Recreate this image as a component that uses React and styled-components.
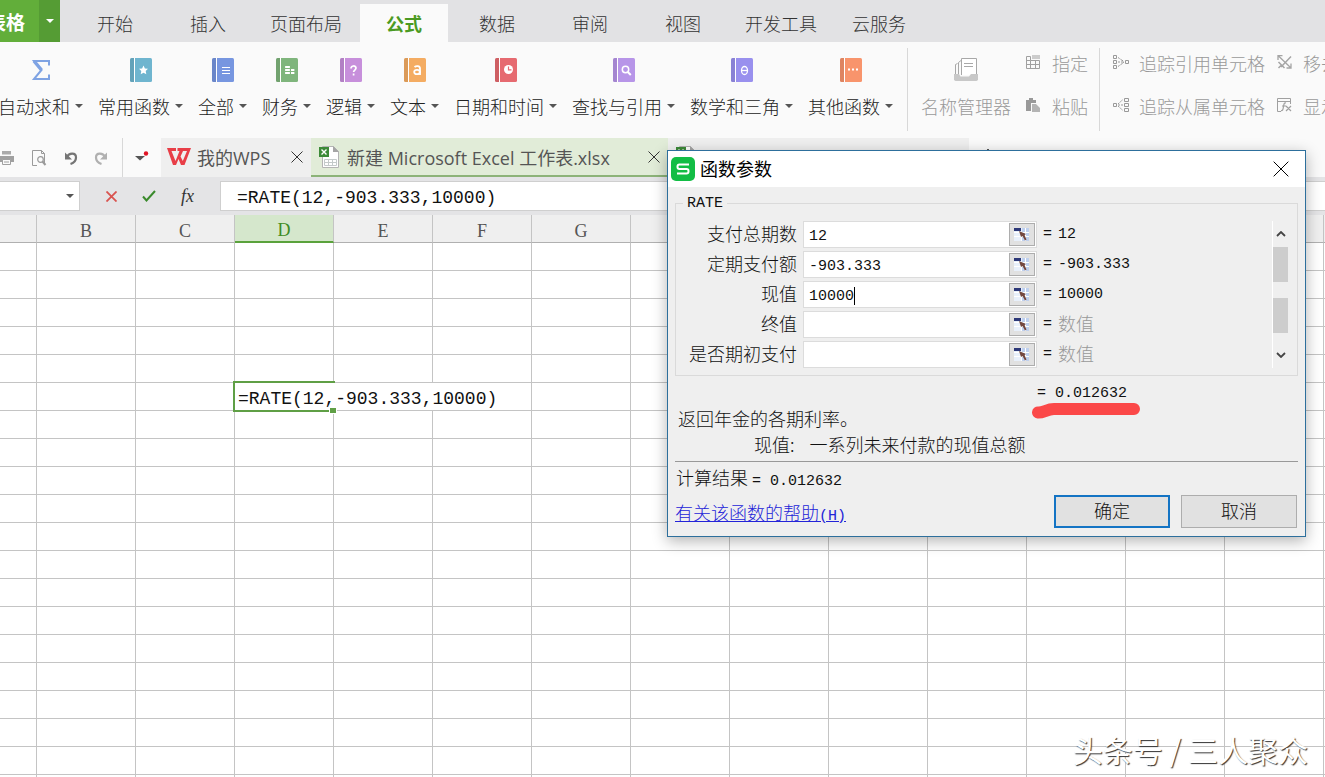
import { useState } from "react";
import styled, { createGlobalStyle } from "styled-components";

const COLUMNS = "ABCDEFGHIJKLMNOPQRSTUVWXYZ".split("")
const ROWS = 40
const FORMULA = "=RATE(12,-903.333,10000)"

const menus = ["开始", "插入", "页面布局", "公式", "数据", "审阅", "视图", "开发工具", "云服务"]

const functions = [
    { name: "常用函数", color: "#6fb5cf", glyph: "star" },
    { name: "全部", color: "#7796e0", glyph: "lines" },
    { name: "财务", color: "#7fb57c", glyph: "coins" },
    { name: "逻辑", color: "#c78fdb", glyph: "question" },
    { name: "文本", color: "#f4ac62", glyph: "letter" },
    { name: "日期和时间", color: "#e66a70", glyph: "clock" },
    { name: "查找与引用", color: "#b795e8", glyph: "search" },
    { name: "数学和三角", color: "#9990ee", glyph: "theta" },
    { name: "其他函数", color: "#f8946c", glyph: "dots" },
]

const params = [
    { id: "nper", label: "支付总期数", value: "12" },
    { id: "pmt", label: "定期支付额", value: "-903.333" },
    { id: "pv", label: "现值", value: "10000", caret: true },
    { id: "fv", label: "终值", value: "" },
    { id: "type", label: "是否期初支付", value: "" },
]

const glyphs = {
    star: <path d="M13.500 7.500l1.400 2.900 3.100.4-2.300 2.200.6 3.200-2.800-1.500-2.800 1.500.6-3.200-2.300-2.200 3.100-.4z" fill="#fff" />,
    lines: <path d="M10 9.500h8M10 12.500h8M10 15.500h8" stroke="#fff" strokeWidth="1.200" />,
    coins: (
        <g fill="#fff">
            <path d="M9.500 8h4l.5.5v1l-.5.5h-4L9 9.500v-1zM9.500 11h4l.5.5v1l-.5.5h-4l-.5-.5v-1zM9.500 14h4l.5.500v1l-.500.500h-4l-.500-.500v-1z" />
            <path d="M15 11h3l.5.5v1l-.5.5h-3zM15 14h3l.5.5v1l-.5.5h-3z" />
        </g>
    ),
    question: <path d="M11 10.500c0-3.400 5-3.200 5-.4 0 2-2.400 1.900-2.400 4M13.600 15.500v2" stroke="#fff" strokeWidth="1.700" fill="none" />,
    letter: (
        <g fill="none" stroke="#fff" strokeWidth="1.800">
            <path d="M10.500 9c1.500-1.200 5.500-1.500 5.500 1.500v6.500" />
            <ellipse cx="13" cy="14" rx="2.800" ry="2.200" />
        </g>
    ),
    clock: (
        <g>
            <circle cx="13.500" cy="11.500" r="4.500" fill="#fff" />
            <path d="M13.500 8.500v3.300h3" stroke="#e66a70" strokeWidth="1.200" fill="none" />
        </g>
    ),
    search: (
        <g fill="none" stroke="#fff">
            <circle cx="12.500" cy="11.500" r="3.200" strokeWidth="1.500" />
            <path d="M14.800 14l3 3" strokeWidth="2" />
        </g>
    ),
    theta: (
        <g fill="none" stroke="#fff" strokeWidth="1.300">
            <ellipse cx="13.500" cy="12.500" rx="3" ry="4" />
            <path d="M10.500 12.500h6" />
        </g>
    ),
    dots: <path d="M8 11.500h2M12 11.500h2M16 11.500h2" stroke="#fff" strokeWidth="1.800" />,
}

function BookIcon({ color, glyph }) {
    return (
        <svg width="22" height="24" viewBox="0 0 22 24">
            <rect width="22" height="24" rx="1.500" fill={color} />
            <path d="M1.500 0H4v24H1.500A1.500 1.500 0 0 1 0 22.500v-21A1.500 1.500 0 0 1 1.500 0z" fill="#000" opacity=".1" />
            <path d="M4.500 0v24" stroke="#fff" />
            {glyphs[glyph]}
        </svg>
    )
}

function CrossIcon({ size = 12, color = "#333", width = 1 }) {
    return (
        <svg width={size} height={size} viewBox="0 0 12 12">
            <path d="M.5.5l11 11M11.500.5l-11 11" stroke={color} strokeWidth={width} vectorEffect="non-scaling-stroke" />
        </svg>
    )
}

function PlusIcon() {
    return (
        <svg width="14" height="14" viewBox="0 0 14 14">
            <path d="M7 0v14M0 7h14" stroke="#555" strokeWidth="2" />
        </svg>
    )
}

function SheetIcon() {
    return (
        <svg width="22" height="24" viewBox="0 0 22 24">
            <path d="M3.500 1.500h11l5 5v16h-16z" fill="#fff" stroke="#b4b4b4" />
            <path d="M14 1v6h6z" fill="#a5a5a5" />
            <path d="M5.500 14.500h12v6h-12zM9.500 14.500v6M13.500 14.500v6M5.500 17.500h12" fill="none" stroke="#c4caca" />
            <rect y="2" width="10" height="10" fill="#3c8a38" />
            <path d="M2.500 4.500l5 5M7.500 4.500l-5 5" stroke="#fff" strokeWidth="1.400" />
        </svg>
    )
}

function PrinterIcon() {
    return (
        <svg width="16" height="16" viewBox="0 0 16 16">
            <path d="M2 1h9v3.500H2z" fill="#aaa" />
            <path d="M0 6h14v6H0z" fill="#a0a0a0" />
            <path d="M2.500 9.500h8v5h-8z" fill="#fafafa" stroke="#a0a0a0" />
            <path d="M4 12h5" stroke="#a0a0a0" />
        </svg>
    )
}

function PreviewIcon() {
    return (
        <svg width="16" height="16" viewBox="0 0 16 16" fill="none">
            <path d="M5 15.500H.5V.5h9l3 3V14M9.500.5v3h3" stroke="#9a9a9a" />
            <circle cx="8.500" cy="9.500" r="2.800" stroke="#9a9a9a" strokeWidth="1.200" />
            <path d="M10.500 11.500l3 3.500" stroke="#9a9a9a" strokeWidth="2" />
        </svg>
    )
}

function UndoIcon({ color, flip }) {
    return (
        <svg width="14" height="14" viewBox="0 0 14 14">
            <g transform={flip ? "translate(14 0) scale(-1 1)" : undefined}>
                <path d="M3 6c2-4.500 9-4.500 9 .5 0 3.500-2.500 5.500-5.500 6.500" fill="none" stroke={color} strokeWidth="2.200" />
                <path d="M1 1.500v7h7z" fill={color} />
            </g>
        </svg>
    )
}

function WpsIcon() {
    return (
        <svg width="24" height="18" viewBox="0 0 24 18">
            <path d="M0 0h9v3H4.500l4 10L12.500 3h-2V0h13.500l-6.500 17h-3.500L11.500 11 9 17H6zM16 3l-2.500 5.500 2.300 4.500L20 3z" fill="#e83e47" fillRule="evenodd" />
        </svg>
    )
}

function NamesIcon() {
    return (
        <svg width="24" height="24" viewBox="0 0 24 24" fill="none" stroke="#a8a8a8">
            <path d="M1.500 17V6.500M4.500 16V4.500M1.500 6.500l2-1M4.500 4.500L7 2.500" />
            <path d="M7.500 17V.5h15v16" fill="#fff" />
            <path d="M10 5.500h9M10 8.500h9" />
            <path d="M0 16h5l1.500 2.500H15l2-2.500h7v6l-1.500 1h-21L0 22z" fill="#c8c8c8" stroke="none" />
        </svg>
    )
}

// small disabled icons on the right end of the ribbon
const smallIcons = {
    assign: (
        <g fill="none" stroke="#a0a0a0">
            <path d="M.5 1.500h4v4h9v8H.5zM.5 5.500h4M4.500 5.500v8M9.500 5.500v8M.5 9.500h13" />
            <path d="M6 0h8v4H6z" fill="#ccc" stroke="none" />
        </g>
    ),
    paste: (
        <g>
            <path d="M0 2h3V0h4v2h3v3H5v8H0z" fill="#999" />
            <path d="M6 6h4l4 4v4H6z" fill="#b4b4b4" />
        </g>
    ),
    precedents: (
        <g fill="none" stroke="#999">
            <path d="M.5.5h3v3h-3zM.5 5.500h3v3h-3zM.5 10.500h3v3h-3zM12.500 5.500h3v3h-3z" />
            <path d="M5 2.500l5 3.500M5 7h6M5 11.500L10 8M9 5l2 2-2 2" strokeDasharray="2 1" />
        </g>
    ),
    dependents: (
        <g fill="none" stroke="#999">
            <path d="M.5 5.500h3v3h-3zM11.500.5h4v3h-4zM11.500 5.500h4v3h-4zM11.500 10.500h4v3h-4z" />
            <path d="M5 6l5-4.500M5 7h5M5 8l5 4.500" strokeDasharray="2 1" />
        </g>
    ),
    remove: (
        <g fill="none" stroke="#a5a5a5">
            <path d="M1 .5l13 12.500M1 5V.5h4.500M14 8.500V13H9.500" strokeWidth="1.300" />
            <path d="M14 1.500L4 12M1.500 7l6 6M1.500 13l3-3" strokeWidth="1.500" />
        </g>
    ),
    show: (
        <g fill="none" stroke="#a0a0a0">
            <path d="M4 13.500H.5V.5h13V4M.5 3.500h13M13.500 4v2" />
            <path d="M9 5c-2-.5-2 1-2.500 3.500S6 13 4 12.500M5 8h4M9 8l5 5M14 8l-5 5" strokeWidth="1.200" />
        </g>
    ),
}

function SmallTool({ icon, children }) {
    return (
        <SmallButton disabled>
            <svg width="16" height="16" viewBox="0 0 16 16">{smallIcons[icon]}</svg>
            {children}
        </SmallButton>
    )
}

function Ribbon() {
    return (
        <RibbonBar>
            <Tool $first>
                <svg width="20" height="24" viewBox="0 0 20 24">
                    <path d="M18 7.500V3H3l7.500 9L3 21h15v-4.500" fill="none" stroke="#7fa3e3" strokeWidth="2" />
                    <path d="M3 3l7.500 9" stroke="#7fa3e3" strokeWidth="3.500" />
                </svg>
                <ToolName>自动求和<Arrow /></ToolName>
            </Tool>
            {functions.map((f) => (
                <Tool key={f.name}>
                    <BookIcon color={f.color} glyph={f.glyph} />
                    <ToolName>{f.name}<Arrow /></ToolName>
                </Tool>
            ))}
            <Group>
                <Tool disabled>
                    <NamesIcon />
                    <ToolName>名称管理器</ToolName>
                </Tool>
                <ToolStack>
                    <SmallTool icon="assign">指定</SmallTool>
                    <SmallTool icon="paste">粘贴</SmallTool>
                </ToolStack>
            </Group>
            <Group>
                <ToolStack>
                    <SmallTool icon="precedents">追踪引用单元格</SmallTool>
                    <SmallTool icon="dependents">追踪从属单元格</SmallTool>
                </ToolStack>
                <ToolStack>
                    <SmallTool icon="remove">移去箭头</SmallTool>
                    <SmallTool icon="show">显示公式</SmallTool>
                </ToolStack>
            </Group>
        </RibbonBar>
    )
}

function DocumentTabs() {
    return (
        <DocBar>
            <QuickTools>
                <IconButton aria-label="打印"><PrinterIcon /></IconButton>
                <IconButton aria-label="打印预览"><PreviewIcon /></IconButton>
                <IconButton aria-label="撤销"><UndoIcon color="#757575" /></IconButton>
                <IconButton aria-label="恢复"><UndoIcon color="#b0b0b0" flip /></IconButton>
            </QuickTools>
            <MoreButton aria-label="更多">
                <svg width="14" height="14" viewBox="0 0 14 14">
                    <path d="M0 5h10l-5 4.500z" fill="#555" />
                    <circle cx="11" cy="2.500" r="2.200" fill="#e01525" />
                </svg>
            </MoreButton>
            <DocTab $width={150}>
                <WpsIcon />
                <DocName>我的WPS</DocName>
                <IconButton aria-label="关闭"><CrossIcon /></IconButton>
            </DocTab>
            <DocTab $width={357} $active>
                <SheetIcon />
                <DocName>新建 Microsoft Excel 工作表.xlsx</DocName>
                <IconButton aria-label="关闭"><CrossIcon /></IconButton>
            </DocTab>
            <DocTab $width={301}>
                <SheetIcon />
            </DocTab>
            <AddTab aria-label="新建"><PlusIcon /></AddTab>
        </DocBar>
    )
}

function Sheet() {
    const [cell, setCell] = useState(FORMULA)
    return (
        <SheetArea>
            <Grid>
                <colgroup>
                    {COLUMNS.map((c) => <Col key={c} $first={c === "A"} />)}
                </colgroup>
                <thead>
                    <tr>
                        {COLUMNS.map((c) => (
                            <Head key={c} $active={c === "D"}>{c === "A" ? "" : c}</Head>
                        ))}
                    </tr>
                </thead>
                <tbody>
                    {Array.from({ length: ROWS }, (_, r) => (
                        <tr key={r}>
                            {COLUMNS.map((c) => {
                                // the formula being typed spills over E6 and F6
                                if (r === 5 && c === "D") {
                                    return (
                                        <EditCell key={c} colSpan={3}>
                                            <CellInput aria-label="D6" value={cell} onChange={(e) => setCell(e.target.value)} />
                                            <CellFrame />
                                        </EditCell>
                                    )
                                }
                                if (r === 5 && (c === "E" || c === "F")) return null
                                return <Cell key={c} />
                            })}
                        </tr>
                    ))}
                </tbody>
            </Grid>
        </SheetArea>
    )
}

function ParamRow({ param }) {
    const [value, setValue] = useState(param.value)
    return (
        <Row>
            <Label htmlFor={param.id}>{param.label}</Label>
            <Field>
                <ParamInput id={param.id} value={value} onChange={(e) => setValue(e.target.value)} />
                {param.caret && <Caret style={{ width: `${value.length}ch` }} />}
                <PickButton aria-label={"选择" + param.label}>
                    <svg width="16" height="16" viewBox="0 0 16 16">
                        <rect x="0" y="1" width="15" height="13" fill="#e8f0fb" />
                        <path d="M8 1h7v13H8z" fill="#bfd0ee" />
                        <path d="M0 5.500h15M0 9.500h15M7.500 5v9M11.500 1v13" stroke="#fff" />
                        <path d="M0 1h7v3H0z" fill="#2c3878" />
                        <path d="M5 4l2 6 1.500-1 2.500 4.500 1.500-1-2-4.500 1.500-1z" fill="#74483f" />
                    </svg>
                </PickButton>
            </Field>
            <Mono>=</Mono>
            {value ? <Mono>{value}</Mono> : <Hint>数值</Hint>}
        </Row>
    )
}

function ArgumentsDialog() {
    return (
        <Dialog role="dialog" aria-label="函数参数">
            <TitleBar>
                <svg width="24" height="24" viewBox="0 0 24 24">
                    <rect width="24" height="24" rx="5" fill="#12bd45" />
                    <path d="M18 7.500H8.500a2 2 0 0 0-2 2v.5a2 2 0 0 0 2 2h7a2 2 0 0 1 2 2v.5a2 2 0 0 1-2 2H6" fill="none" stroke="#fff" strokeWidth="2" />
                </svg>
                <Title>函数参数</Title>
                <IconButton aria-label="关闭"><CrossIcon size={16} color="#000" /></IconButton>
            </TitleBar>
            <Body>
                <ParamSet>
                    <legend>RATE</legend>
                    <Rows>
                        {params.map((p) => <ParamRow key={p.id} param={p} />)}
                    </Rows>
                    <ScrollTrack>
                        <ScrollButton aria-label="向上">
                            <svg width="10" height="6" viewBox="0 0 10 6"><path d="M1 5l4-4 4 4" fill="none" stroke="#444" strokeWidth="1.800" /></svg>
                        </ScrollButton>
                        <Thumb />
                        <Thumb />
                        <ScrollButton aria-label="向下">
                            <svg width="10" height="6" viewBox="0 0 10 6"><path d="M1 1l4 4 4-4" fill="none" stroke="#444" strokeWidth="1.800" /></svg>
                        </ScrollButton>
                    </ScrollTrack>
                </ParamSet>
                <Preview>
                    <PreviewValue>
                        <Mono>= 0.012632</Mono>
                        <Marker width="108" height="16" viewBox="0 0 108 16">
                            <path d="M6 9.500c5 .5 9-3.500 16-3.500h80" fill="none" stroke="#fb4848" strokeWidth="12" strokeLinecap="round" />
                        </Marker>
                    </PreviewValue>
                </Preview>
                <Line>返回年金的各期利率。</Line>
                <Line $indent><span>现值:</span><span>一系列未来付款的现值总额</span></Line>
                <Rule />
                <Outcome>计算结果<Mono>= 0.012632</Mono></Outcome>
                <Footer>
                    <HelpLink href="#help">有关该函数的帮助<Mono>(H)</Mono></HelpLink>
                    <DialogButton $primary>确定</DialogButton>
                    <DialogButton>取消</DialogButton>
                </Footer>
            </Body>
        </Dialog>
    )
}

export default function App() {
    const [formula, setFormula] = useState(FORMULA)
    return (
        <Window>
            <GlobalStyle />
            <MenuBar>
                <AppButton>表格</AppButton>
                <AppMore aria-label="菜单"><Arrow $light /></AppMore>
                <Menus>
                    {menus.map((m) => <MenuTab key={m} $active={m === "公式"}>{m}</MenuTab>)}
                </Menus>
            </MenuBar>
            <Ribbon />
            <DocumentTabs />
            <FormulaBar>
                <NameBox>
                    <input aria-label="名称框" />
                    <Arrow />
                </NameBox>
                <FormulaTools>
                    <IconButton aria-label="取消"><CrossIcon size={11} color="#d9534f" width={1.8} /></IconButton>
                    <IconButton aria-label="输入">
                        <svg width="14" height="12" viewBox="0 0 14 12"><path d="M1 6.500l3.500 4L13 1" fill="none" stroke="#3a8a2c" strokeWidth="2" /></svg>
                    </IconButton>
                    <FxButton>fx</FxButton>
                </FormulaTools>
                <FormulaInput aria-label="编辑栏" value={formula} onChange={(e) => setFormula(e.target.value)} />
            </FormulaBar>
            <Sheet />
            <ArgumentsDialog />
            <Watermark>头条号 / 三人聚众</Watermark>
        </Window>
    )
}

const GlobalStyle = createGlobalStyle`
    * {
        box-sizing: border-box;
    }
    body {
        margin: 0;
        overflow: hidden;
        font-family: "Noto Sans CJK SC", sans-serif;
        font-size: 18px;
        color: #333;
    }
    button, input {
        margin: 0;
        padding: 0;
        border: 0;
        background: none;
        border-radius: 0;
        font: inherit;
        color: inherit;
        outline: none;
    }
    svg {
        display: block;
        flex: none;
    }
`
const Window = styled.div`
    position: relative;
    display: flex;
    flex-direction: column;
    height: 100vh;
    overflow: hidden;
    background: #fff;
    font-weight: 300;
    white-space: nowrap;
`
const Arrow = styled.span`
    flex: none;
    border: 4px solid transparent;
    border-top: 4px solid ${p => p.$light ? "#fff" : "#555"};
    border-bottom: 0;
`
const IconButton = styled.button`
    display: flex;
    align-items: center;
    justify-content: center;
`

/* menu */
const MenuBar = styled.nav`
    display: flex;
    flex: none;
    height: 42px;
    background: #e2e2e4;
`
const AppButton = styled.button`
    display: flex;
    align-items: center;
    justify-content: flex-end;
    width: 39px;
    padding-right: 14px;
    background: #62ae3a;
    color: #fff;
    font-size: 19px;
    font-weight: 700;
`
const AppMore = styled.button`
    display: flex;
    align-items: center;
    justify-content: center;
    width: 21px;
    background: #559c34;
`
const Menus = styled.div`
    display: flex;
    gap: 5px;
    margin: 4px 0 0 11px;
`
const MenuTab = styled.button`
    min-width: 88px;
    padding: 0 13px;
    background: ${p => p.$active ? "#fafafa" : "none"};
    color: ${p => p.$active ? "#4b9a22" : "#333"};
    font-weight: ${p => p.$active ? 700 : 300};
`

/* ribbon */
const RibbonBar = styled.div`
    display: flex;
    flex: none;
    height: 96px;
    background: #fafafa;
`
const Tool = styled.button`
    display: flex;
    flex: none;
    flex-direction: column;
    align-items: center;
    gap: 11px;
    padding-top: 16px;
    margin-left: ${p => p.$first ? "-2px" : "0"};
    margin-right: 15px;
    color: #222;
    &:disabled{
        color: #999;
    }
`
const ToolName = styled.span`
    display: flex;
    align-items: center;
    gap: 5px;
    line-height: 26px;
`
const Group = styled.div`
    display: flex;
    flex: none;
    margin-top: 6px;
    margin-left: -1px;
    height: 83px;
    padding-left: 13px;
    border-left: 1px solid #d8d8d8;
    & > ${Tool}{
        padding-top: 10px;
    }
`
const ToolStack = styled.div`
    display: flex;
    flex-direction: column;
    gap: 17px;
    padding-top: 2px;
    margin-right: 12px;
`
const SmallButton = styled.button`
    display: flex;
    align-items: center;
    gap: 10px;
    line-height: 26px;
    color: #999;
`

/* documents */
const DocBar = styled.div`
    display: flex;
    flex: none;
    height: 39px;
    background: #fafafa;
`
const QuickTools = styled.div`
    display: flex;
    align-items: center;
    width: 123px;
    gap: 16px;
    border-right: 1px solid #d8d8d8;
`
const MoreButton = styled(IconButton)`
    width: 38px;
`
const DocTab = styled.div`
    display: flex;
    flex: none;
    align-items: center;
    width: ${p => p.$width}px;
    padding: 0 8px 0 ${p => p.$width > 200 ? 8 : 6}px;
    background: ${p => p.$active ? "#e1ecd8" : "#efefef"};
    border-bottom: 2px solid ${p => p.$active ? "#8cb378" : "#efefef"};
`
const DocName = styled.span`
    flex: 1;
    padding-left: 6px;
    font-family: "Open Sans", "Noto Sans CJK SC", sans-serif;
    font-weight: 400;
    color: #555;
`
const AddTab = styled(IconButton)`
    width: 38px;
    height: 36px;
`

/* formula bar */
const FormulaBar = styled.div`
    display: flex;
    flex: none;
    height: 38px;
    padding: 4px 0;
    background: #e4e4e6;
`
const NameBox = styled.div`
    display: flex;
    align-items: center;
    width: 80px;
    padding-right: 5px;
    background: #fff;
    border: 1px solid #cfcfcf;
    border-left: 0;
    & input{
        width: 66px;
    }
`
const FormulaTools = styled.div`
    display: flex;
    align-items: center;
    justify-content: center;
    gap: 25px;
    width: 140px;
`
const FxButton = styled.button`
    font-family: "Liberation Serif", serif;
    font-style: italic;
    font-weight: 400;
`
const FormulaInput = styled.input`
    flex: 1;
    padding: 3px 0 0 16px;
    background: #fff;
    border: 1px solid #cfcfcf;
    border-right: 0;
    font-family: "Liberation Mono", monospace;
    font-weight: 400;
    color: #111;
`

/* sheet */
const SheetArea = styled.main`
    flex: 1;
    min-height: 0;
    overflow: hidden;
`
const Grid = styled.table`
    width: 2512px;
    table-layout: fixed;
    border-spacing: 0;
`
const Col = styled.col`
    width: ${p => p.$first ? 37 : 99}px;
`
const Head = styled.th`
    height: 28px;
    padding: 4px 0 0;
    background: ${p => p.$active ? "#d5e7cc" : "#efefef"};
    border-right: 1px solid #c4c4c4;
    border-bottom: ${p => p.$active ? "2px solid #5aa23c" : "1px solid #b0b0b0"};
    color: ${p => p.$active ? "#3f8c24" : "#555"};
    font-family: "Liberation Serif", serif;
    font-weight: 400;
    line-height: 20px;
`
const Cell = styled.td`
    height: 28px;
    padding: 0;
    border-right: 1px solid #c4c4c4;
    border-bottom: 1px solid #c4c4c4;
`
const EditCell = styled(Cell)`
    position: relative;
`
const CellInput = styled.input`
    display: block;
    width: 100%;
    height: 27px;
    padding: 4px 0 0 3px;
    font-family: "Liberation Mono", monospace;
    font-weight: 400;
    color: #111;
`
const CellFrame = styled.span`
    position: absolute;
    top: -2px;
    left: -2px;
    width: 102px;
    height: 31px;
    border: 2px solid #5f9f45;
    border-right: 0;
    pointer-events: none;
    &::after{
        content: "";
        position: absolute;
        right: -2px;
        bottom: -4px;
        width: 6px;
        height: 5px;
        background: #5f9f45;
        border: 1px solid #fff;
    }
`

/* dialog */
const Dialog = styled.section`
    position: absolute;
    top: 150px;
    left: 667px;
    width: 639px;
    background: #efefef;
    border: 1px solid #2d6f9c;
    box-shadow: 0 4px 14px rgba(0, 0, 0, .3);
    color: #111;
`
const TitleBar = styled.header`
    display: flex;
    align-items: center;
    height: 36px;
    padding: 0 16px 0 3px;
    background: #fff;
`
const Title = styled.span`
    flex: 1;
    padding-left: 5px;
    padding-bottom: 2px;
    color: #000;
    font-weight: 400;
`
const Body = styled.div`
    padding: 6px 7px 8px;
`
const ParamSet = styled.fieldset`
    display: flex;
    justify-content: space-between;
    margin: 0;
    padding: 8px 9px 7px 0;
    border: 1px solid #dadada;
    & legend{
        margin-left: 7px;
        padding: 2px 4px 0;
        font-family: "Liberation Mono", monospace;
        font-size: 15px;
        font-weight: 400;
        line-height: 18px;
        color: #111;
    }
`
const Rows = styled.div`
    display: flex;
    flex-direction: column;
    gap: 3px;
`
const Row = styled.div`
    display: grid;
    grid-template-columns: 121px 234px 9px auto;
    grid-template-rows: 27px;
    column-gap: 6px;
    align-items: center;
`
const Label = styled.label`
    padding-bottom: 4px;
    text-align: right;
    line-height: 22px;
`
const Field = styled.div`
    position: relative;
    display: flex;
    align-items: center;
    height: 27px;
    padding-right: 1px;
    background: #fff;
    border: 1px solid #dcdcdc;
`
const Mono = styled.span`
    font-family: "Liberation Mono", monospace;
    font-size: 15px;
    font-weight: 400;
    color: #111;
`
const Hint = styled.span`
    padding-bottom: 4px;
    line-height: 22px;
    color: #999;
`
const ParamInput = styled.input`
    flex: 1;
    min-width: 0;
    height: 25px;
    padding: 4px 0 0 5px;
    font-family: "Liberation Mono", monospace;
    font-size: 15px;
    font-weight: 400;
    color: #111;
`
const Caret = styled.span`
    position: absolute;
    left: 6px;
    top: 5px;
    height: 18px;
    border-right: 1px solid #000;
    font-family: "Liberation Mono", monospace;
    font-size: 15px;
    pointer-events: none;
`
const PickButton = styled(IconButton)`
    width: 26px;
    height: 23px;
    background: #e1e1e1;
    border: 1px solid #adadad;
`
const ScrollTrack = styled.div`
    display: flex;
    flex-direction: column;
    width: 16px;
    height: 147px;
    border-left: 1px solid #fff;
`
const ScrollButton = styled(IconButton)`
    height: 26px;
    &:last-child{
        margin-top: auto;
    }
`
const Thumb = styled.div`
    height: 35px;
    background: #cdcdcd;
    & + &{
        margin-top: 16px;
    }
`
const Preview = styled.div`
    display: flex;
    align-items: center;
    height: 30px;
    padding-left: 362px;
`
const PreviewValue = styled.div`
    position: relative;
    line-height: 20px;
`
const Marker = styled.svg`
    position: absolute;
    top: 24px;
    left: -5px;
`
const Line = styled.p`
    display: flex;
    gap: 15px;
    margin: 0;
    padding-left: ${p => p.$indent ? 79 : 3}px;
    padding-bottom: 2px;
    line-height: 24px;
`
const Rule = styled.hr`
    margin: 3px 0 0;
    border: 0;
    border-top: 1px solid #999;
`
const Outcome = styled.p`
    display: flex;
    align-items: baseline;
    gap: 4px;
    height: 33px;
    margin: 0;
    padding-left: 1px;
    line-height: 30px;
`
const Footer = styled.footer`
    display: flex;
    align-items: center;
    gap: 11px;
    height: 33px;
    padding-right: 1px;
`
const HelpLink = styled.a`
    margin-right: auto;
    color: #2323d8;
    & ${Mono}{
        color: inherit;
    }
`
const DialogButton = styled.button`
    width: 116px;
    height: 33px;
    padding-bottom: 3px;
    background: #e1e1e1;
    border: ${p => p.$primary ? "2px solid #1474c4" : "1px solid #adadad"};
`
const Watermark = styled.div`
    position: absolute;
    right: 17px;
    bottom: 7px;
    font-size: 30px;
    font-weight: 400;
    line-height: 42px;
    color: #fff;
    text-shadow: 1px 1px 1px #333;
    pointer-events: none;
`
